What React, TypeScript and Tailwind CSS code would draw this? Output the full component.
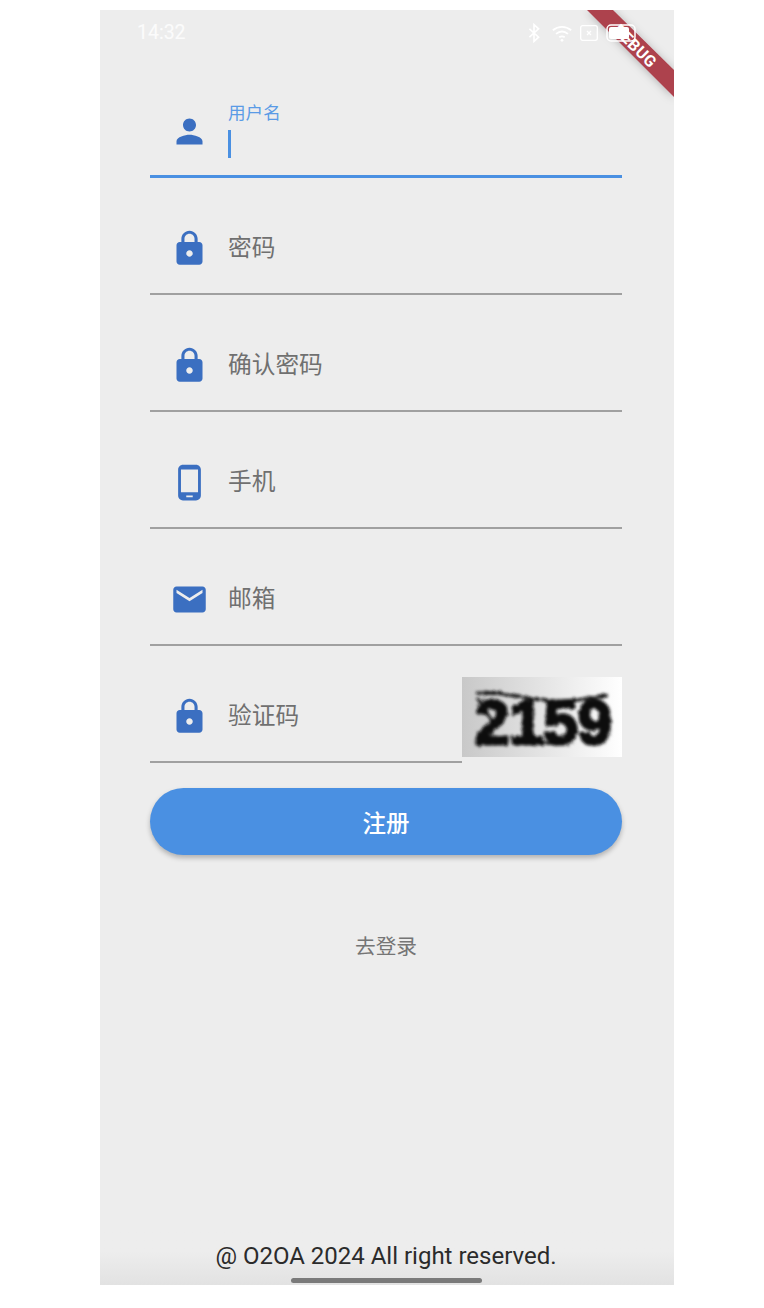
const ICON = "#3b6fc1";

const paths = {
  person:
    "M12 12c2.21 0 4-1.79 4-4s-1.79-4-4-4-4 1.79-4 4 1.79 4 4 4zm0 2c-2.67 0-8 1.34-8 4v2h16v-2c0-2.66-5.33-4-8-4z",
  lock:
    "M18 8h-1V6c0-2.76-2.24-5-5-5S7 3.24 7 6v2H6c-1.1 0-2 .9-2 2v10c0 1.1.9 2 2 2h12c1.1 0 2-.9 2-2V10c0-1.1-.9-2-2-2zm-6 9c-1.1 0-2-.9-2-2s.9-2 2-2 2 .9 2 2-.9 2-2 2zm3.1-9H8.9V6c0-1.71 1.39-3.1 3.1-3.1 1.71 0 3.1 1.39 3.1 3.1v2z",
  phone:
    "M16 1H8C6.34 1 5 2.34 5 4v16c0 1.66 1.34 3 3 3h8c1.66 0 3-1.34 3-3V4c0-1.66-1.34-3-3-3zm-2 20h-4v-1h4v1zm3.25-3H6.75V4h10.5v14z",
  mail:
    "M20 4H4c-1.1 0-1.99.9-1.99 2L2 18c0 1.1.9 2 2 2h16c1.1 0 2-.9 2-2V6c0-1.1-.9-2-2-2zm0 4l-8 5-8-5V6l8 5 8-5v2z",
};

function Icon({ d }: { d: string }) {
  return (
    <svg viewBox="0 0 24 24" className="w-[39px] h-[39px] shrink-0" fill={ICON}>
      <path d={d} />
    </svg>
  );
}

function Field({ icon, label, className = "" }: { icon: string; label: string; className?: string }) {
  return (
    <div className={`h-[117px] flex items-center gap-[19.5px] pl-[19.5px] pt-[26px] border-b-2 border-[#a0a0a0] ${className}`}>
      <Icon d={icon} />
      <span className="text-[23.7px] leading-none text-[#707070] mt-[1px]">{label}</span>
    </div>
  );
}

function Captcha() {
  return (
    <svg viewBox="0 0 160 80" className="w-[160px] h-[80px] shrink-0 self-start mt-[31px]">
      <defs>
        <linearGradient id="cg" x1="0" x2="1" y1="0" y2="0">
          <stop offset="0" stopColor="#c8c8c8" />
          <stop offset="0.5" stopColor="#e4e4e4" />
          <stop offset="1" stopColor="#ffffff" />
        </linearGradient>
        <filter id="cb" x="-10%" y="-10%" width="120%" height="120%">
          <feTurbulence type="fractalNoise" baseFrequency="0.35" numOctaves="2" seed="4" result="n" />
          <feDisplacementMap in="SourceGraphic" in2="n" scale="5" result="d" />
          <feGaussianBlur in="d" stdDeviation="1.5" />
        </filter>
      </defs>
      <rect width="160" height="80" fill="url(#cg)" />
      <g filter="url(#cb)">
        <text
          x="13"
          y="67"
          fontFamily="'Liberation Sans', sans-serif"
          fontWeight="700"
          fontSize="63"
          textLength="137"
          lengthAdjust="spacingAndGlyphs"
          fill="#0c0c0c"
          stroke="#0c0c0c"
          strokeWidth="3"
        >
          2159
        </text>
        <path d="M14 16 C40 14 70 24 95 24 C115 24 135 20 146 18" stroke="#111" strokeWidth="3" fill="none" />
        <path d="M16 22 L30 44 M20 16 L40 16 M58 62 L100 68" stroke="#111" strokeWidth="3" fill="none" />
      </g>
    </svg>
  );
}

function StatusIcons() {
  return (
    <div className="flex items-center text-white">
      <svg viewBox="0 0 24 24" className="w-[20px] h-[20px] mr-[7px]" fill="none" stroke="#fff" strokeWidth="2">
        <path d="M6.5 7l11 10-5.5 5V2l5.5 5-11 10" />
      </svg>
      <svg viewBox="0 0 24 24" className="w-[22px] h-[22px] mr-[7px]" fill="none" stroke="#fff" strokeWidth="2">
        <path d="M2 9c6-5 14-5 20 0M5.5 13c4-3.3 9-3.3 13 0M9 16.6c2-1.3 4-1.3 6 0" />
        <circle cx="12" cy="20" r="1.5" fill="#fff" stroke="none" />
      </svg>
      <svg viewBox="0 0 18 16" className="w-[18px] h-[16px] mr-[8px]" fill="none" stroke="#fff" strokeWidth="1.3">
        <rect x="0.7" y="0.7" width="16.6" height="14.6" rx="2" />
        <path d="M7 6l4 4M11 6l-4 4" />
      </svg>
      <svg viewBox="0 0 30 18" className="w-[30px] h-[18px]" fill="none">
        <rect x="1" y="1" width="28" height="16" rx="4" stroke="#fff" strokeWidth="1.5" />
        <rect x="3" y="3" width="20" height="12" rx="2" fill="#fff" />
      </svg>
    </div>
  );
}

export default function App() {
  return (
    <div
      className="w-[764px] h-[1308px] bg-white pt-[10px] pl-[100px]"
      style={{ fontFamily: "Roboto, 'Noto Sans CJK SC', sans-serif" }}
    >
      <div className="relative w-[574px] h-[1275px] bg-[#ededed] overflow-hidden flex flex-col">
        <svg viewBox="0 0 574 1275" className="absolute inset-0 w-[574px] h-[1275px] pointer-events-none">
          <defs>
            <filter id="bs" x="-20%" y="-20%" width="140%" height="140%">
              <feDropShadow dx="0" dy="1" stdDeviation="4" floodColor="#000" floodOpacity="0.25" />
            </filter>
          </defs>
          <polygon points="487,0 513,0 574,60 574,87" fill="#ad434e" filter="url(#bs)" />
          <text
            x="0"
            y="0"
            transform="translate(535 36) rotate(45)"
            textAnchor="middle"
            dominantBaseline="central"
            fill="#fff"
            fontSize="16"
            fontWeight="700"
            fontFamily="Roboto, sans-serif"
            letterSpacing="0.5"
          >
            DEBUG
          </text>
        </svg>

        <div className="relative h-[51px] shrink-0 flex items-center justify-between pl-[37px] pr-[38px] pb-[6px]">
          <span className="text-[19.5px] leading-none text-white/80">14:32</span>
          <StatusIcons />
        </div>

        <div className="relative pl-[50px] pr-[52px] flex flex-col">
          <div className="h-[117px] flex items-center gap-[19.5px] pl-[19.5px] pt-[26px] border-b-[3px] border-[#4a90e2]">
            <Icon d={paths.person} />
            <div className="flex flex-col self-start mt-[26px]">
              <span className="text-[17.6px] leading-none text-[#5a9be6] -mt-[8px]">用户名</span>
              <span className="w-[3px] h-[28px] bg-[#4a90e2] mt-[7px]" />
            </div>
          </div>
          <Field icon={paths.lock} label="密码" />
          <Field icon={paths.lock} label="确认密码" />
          <Field icon={paths.phone} label="手机" />
          <Field icon={paths.mail} label="邮箱" />
          <div className="flex">
            <Field icon={paths.lock} label="验证码" className="flex-1" />
            <Captcha />
          </div>
          <button className="mt-[25px] h-[67px] pt-[6px] rounded-full bg-[#4a90e2] text-white text-[23.5px] font-medium shadow-[0_3px_5px_rgba(0,0,0,0.25)]">
            注册
          </button>
          <div className="mt-[82px] text-center text-[20.7px] leading-none text-[#757575]">去登录</div>
        </div>

        <div className="relative mt-auto h-[56px] bg-gradient-to-b from-[#ededed] from-40% to-[#e2e2e2] flex justify-center pt-[11px] pr-[2px]">
          <span className="text-[24px] leading-[32px] text-[#2b2b2b]">@ O2OA 2024 All right reserved.</span>
          <div className="absolute left-[191px] bottom-[2px] w-[191px] h-[5px] rounded-full bg-[#7a7a7a]" />
        </div>
      </div>
    </div>
  );
}
